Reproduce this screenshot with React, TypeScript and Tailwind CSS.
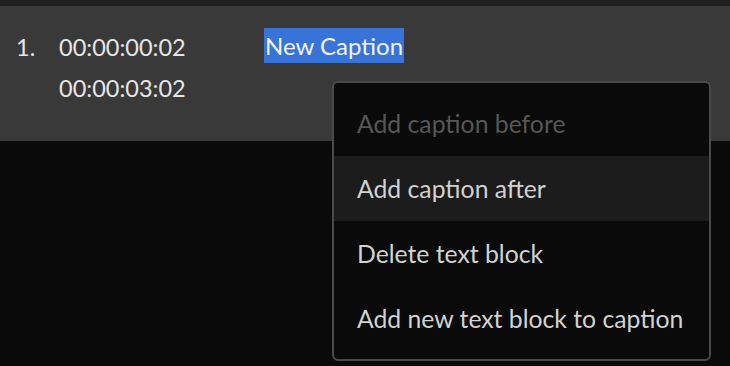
export default function App() {
  const items = [
    { label: 'Add caption before', disabled: true },
    { label: 'Add caption after', active: true },
    { label: 'Delete text block' },
    { label: 'Add new text block to caption' },
  ]

  return (
    <div className="relative h-[366px] w-[730px] overflow-hidden bg-[#0a0a0a] font-['Lato',sans-serif]">
      <div className="h-[6px] bg-[#1f1f1f]" />
      <div className="flex h-[135px] bg-[#393939] pt-[21px] text-[23.5px] text-[#e6e6e6]">
        <div className="w-[59px] shrink-0 pl-[16px] leading-[40px]">1.</div>
        <div className="flex w-[205px] shrink-0 flex-col leading-[41px]">
          <span>00:00:00:02</span>
          <span>00:00:03:02</span>
        </div>
        <div className="pt-[1px]">
          <span className="inline-block h-[35px] bg-[#3874d8] px-[1px] text-[24px] leading-[35px] text-[#f2f2f2]">New Caption</span>
        </div>
      </div>

      <div className="absolute left-[332px] top-[81px] w-[379px] rounded-[6px] border-2 border-[#4a4a4a] bg-[#0a0a0a] py-[8px]">
        {items.map((it) => (
          <div
            key={it.label}
            className={
              'flex h-[65px] items-center pl-[23px] text-[24.75px] ' +
              (it.disabled ? 'text-[#575757] ' : 'text-[#d2d2d2] ') +
              (it.active ? 'bg-[#1c1c1c]' : '')
            }
          >
            {it.label}
          </div>
        ))}
      </div>
    </div>
  )
}
